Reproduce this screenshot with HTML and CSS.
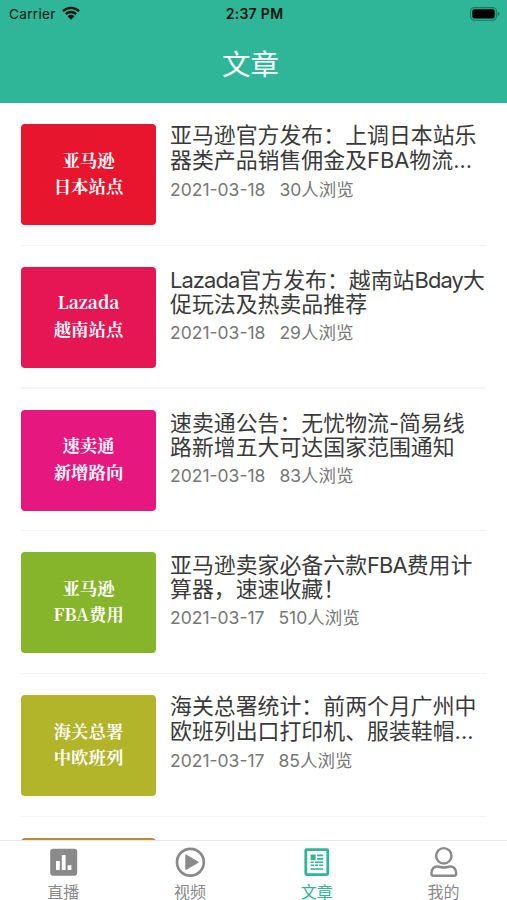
FILE: index.html
```
<!DOCTYPE html>
<html lang="zh-CN">
<head>
    <meta charset="UTF-8">
    <meta name="viewport" content="width=device-width, initial-scale=1.0">
    <title>文章</title>
    <link rel="stylesheet" href="styles.css">
</head>
<body>
    <header class="header">
        <div class="status-bar">
            <div class="carrier">
                <span>Carrier</span>
                <svg class="wifi" viewBox="0 0 18 14" width="18" height="14">
                    <path d="M1 5.2a11.5 11.5 0 0 1 16 0M3.8 8.1a7.5 7.5 0 0 1 10.4 0" fill="none" stroke="#07140f" stroke-width="2.3"/>
                    <path d="M5.6 10.2a4.9 4.9 0 0 1 6.8 0L9 13.8z" fill="#07140f"/>
                </svg>
            </div>
            <div class="time">2:37 PM</div>
            <div class="battery">
                <svg viewBox="0 0 30 14" width="30" height="14">
                    <rect x=".6" y=".6" width="25.8" height="12.6" rx="3.6" fill="none" stroke="#1f7660" stroke-width="1.1"/>
                    <rect x="2.3" y="2.3" width="22.4" height="9.2" rx="2" fill="#000"/>
                    <path d="M27.6 4.8q2 .7 2 2.2t-2 2.2z" fill="#1f7660"/>
                </svg>
            </div>
        </div>
        <h1 class="page-title">文章</h1>
    </header>

    <main class="list">
        <article class="item">
            <div class="thumb red">亚马逊<br>日本站点</div>
            <div class="info">
                <h2 class="title">亚马逊官方发布：上调日本站乐<br>器类产品销售佣金及FBA物流...</h2>
                <p class="meta"><span class="date">2021-03-18</span><span>30人浏览</span></p>
            </div>
        </article>
        <article class="item">
            <div class="thumb rose">Lazada<br>越南站点</div>
            <div class="info">
                <h2 class="title low"><span class="latin">Lazada</span>官方发布：越南站<span class="latin">Bday</span>大<br>促玩法及热卖品推荐</h2>
                <p class="meta"><span class="date">2021-03-18</span><span>29人浏览</span></p>
            </div>
        </article>
        <article class="item">
            <div class="thumb pink">速卖通<br>新增路向</div>
            <div class="info">
                <h2 class="title low">速卖通公告：无忧物流-简易线<br>路新增五大可达国家范围通知</h2>
                <p class="meta"><span class="date">2021-03-18</span><span>83人浏览</span></p>
            </div>
        </article>
        <article class="item">
            <div class="thumb green">亚马逊<br>FBA费用</div>
            <div class="info">
                <h2 class="title low">亚马逊卖家必备六款<span class="latin">FBA</span>费用计<br>算器，速速收藏！</h2>
                <p class="meta"><span class="date">2021-03-17</span><span>510人浏览</span></p>
            </div>
        </article>
        <article class="item">
            <div class="thumb olive">海关总署<br>中欧班列</div>
            <div class="info">
                <h2 class="title">海关总署统计：前两个月广州中<br>欧班列出口打印机、服装鞋帽...</h2>
                <p class="meta"><span class="date">2021-03-17</span><span>85人浏览</span></p>
            </div>
        </article>
        <article class="item">
            <div class="thumb orange"></div>
        </article>
    </main>

    <nav class="tabs">
        <a class="tab">
            <svg viewBox="0 0 32 32" width="32" height="32">
                <rect x="3.2" y="2.8" width="27" height="27" rx="3" fill="#8a8a8a"/>
                <path d="M9 15h3.8v9H9zM14.8 9h3.8v15h-3.8zM20.6 19.2h3.8V24h-3.8z" fill="#fff"/>
            </svg>
            <span>直播</span>
        </a>
        <a class="tab">
            <svg viewBox="0 0 32 32" width="32" height="32">
                <circle cx="16.4" cy="16.2" r="13.4" fill="none" stroke="#8a8a8a" stroke-width="2.7"/>
                <path d="M11.8 8.8v14.8l12.6-7.4z" fill="#8a8a8a" stroke="#8a8a8a" stroke-linejoin="round"/>
            </svg>
            <span>视频</span>
        </a>
        <a class="tab active">
            <svg viewBox="0 0 32 32" width="32" height="32">
                <rect x="4.8" y="3.6" width="22" height="25" rx="1" fill="none" stroke="#2fb597" stroke-width="2.8"/>
                <path d="M9.6 8.4h5v5.8h-5zM16.2 8.4h6v1.8h-6zM16.2 12h6v1.7h-6zM14 15.4h8.2V17H14zM9.6 15.4h3V17h-3zM9.6 18.4H13V20H9.6zM14 18.4h3V20h-3zM18.2 18.4h4V20h-4zM9.6 22.2h12.6v1.5H9.6z" fill="#2fb597"/>
            </svg>
            <span>文章</span>
        </a>
        <a class="tab">
            <svg viewBox="0 0 32 32" width="32" height="32" fill="none" stroke="#8a8a8a" stroke-width="2.4">
                <circle cx="15.8" cy="9.8" r="7.7"/>
                <path d="M9.5 20.5C12 20.5 13 21.5 15.8 21.5S19.6 20.5 22.1 20.5C26 20.5 28 23.5 28.2 27.6Q28.2 29.8 26.2 29.8H5.4Q3.4 29.8 3.4 27.6C3.6 23.5 5.6 20.5 9.5 20.5z"/>
            </svg>
            <span>我的</span>
        </a>
    </nav>
</body>
</html>
```
FILE: styles.css
```
* {
    box-sizing: border-box;
}
body {
    display: flex;
    flex-direction: column;
    height: 900px;
    margin: 0;
    background: #fff;
    font-family: Inter, "Noto Sans CJK SC", sans-serif;
    overflow: hidden;
}
h1, h2, p {
    margin: 0;
    font-weight: normal;
}

/* Header */
.header {
    flex: none;
    height: 103px;
    background: #2fb597;
}
.status-bar {
    display: grid;
    grid-template-columns: 1fr auto 1fr;
    align-items: center;
    height: 27px;
    padding: 0 7px 0 9px;
    font-size: 13.5px;
    color: #07140f;
}
.carrier {
    display: flex;
    align-items: center;
    gap: 6px;
    letter-spacing: 0.35px;
}
.wifi {
    margin-top: -2px;
}
.time {
    font-weight: 600;
    font-size: 14px;
    letter-spacing: 0.3px;
}
.battery {
    display: flex;
    justify-content: flex-end;
}
.page-title {
    height: 76px;
    padding-right: 6px;
    font-size: 28.5px;
    line-height: 76px;
    text-align: center;
    color: #fff;
}

/* Article list */
.list {
    flex: 1;
    min-height: 0;
    padding: 0 21px;
    overflow: hidden;
}
.item {
    display: flex;
    gap: 14px;
    height: 142.8px;
    padding-top: 21px;
    background: linear-gradient(#f4f4f4, #f4f4f4) 0 141.5px / 100% 2px no-repeat;
}
.thumb {
    flex: none;
    width: 135px;
    height: 101px;
    padding-top: 22.5px;
    border-radius: 4px;
    font-family: "Noto Serif CJK SC", "Noto Sans CJK SC", serif;
    font-size: 17.4px;
    font-weight: bold;
    line-height: 26.5px;
    text-align: center;
    color: #fff;
}
.red { background: #e8152e; }
.rose { background: #e61655; }
.pink { background: #e6177f; }
.green { background: #86b42a; }
.olive { background: #b2b42a; }
.orange { background: #c08a35; }

.title {
    height: 49px;
    margin-top: -1px;
    font-size: 21.9px;
    line-height: 24.5px;
    color: #3a3a3a;
    white-space: nowrap;
}
.low {
    padding-top: 2px;
    line-height: 24px;
}
.latin {
    letter-spacing: -0.9px;
}
.meta {
    display: flex;
    gap: 14px;
    margin-top: 5px;
    font-size: 17.5px;
    line-height: 26px;
    color: #777;
    white-space: nowrap;
}

/* Bottom tabs */
.tabs {
    flex: none;
    display: grid;
    grid-template-columns: repeat(4, 1fr);
    height: 60px;
    border-top: 1px solid #e6e6e6;
    background: #fff;
}
.tab {
    display: flex;
    flex-direction: column;
    align-items: center;
    gap: 6px;
    padding-top: 5px;
    font-size: 16px;
    line-height: 16px;
    color: #8a8a8a;
}
.active {
    color: #2fb597;
}
```
